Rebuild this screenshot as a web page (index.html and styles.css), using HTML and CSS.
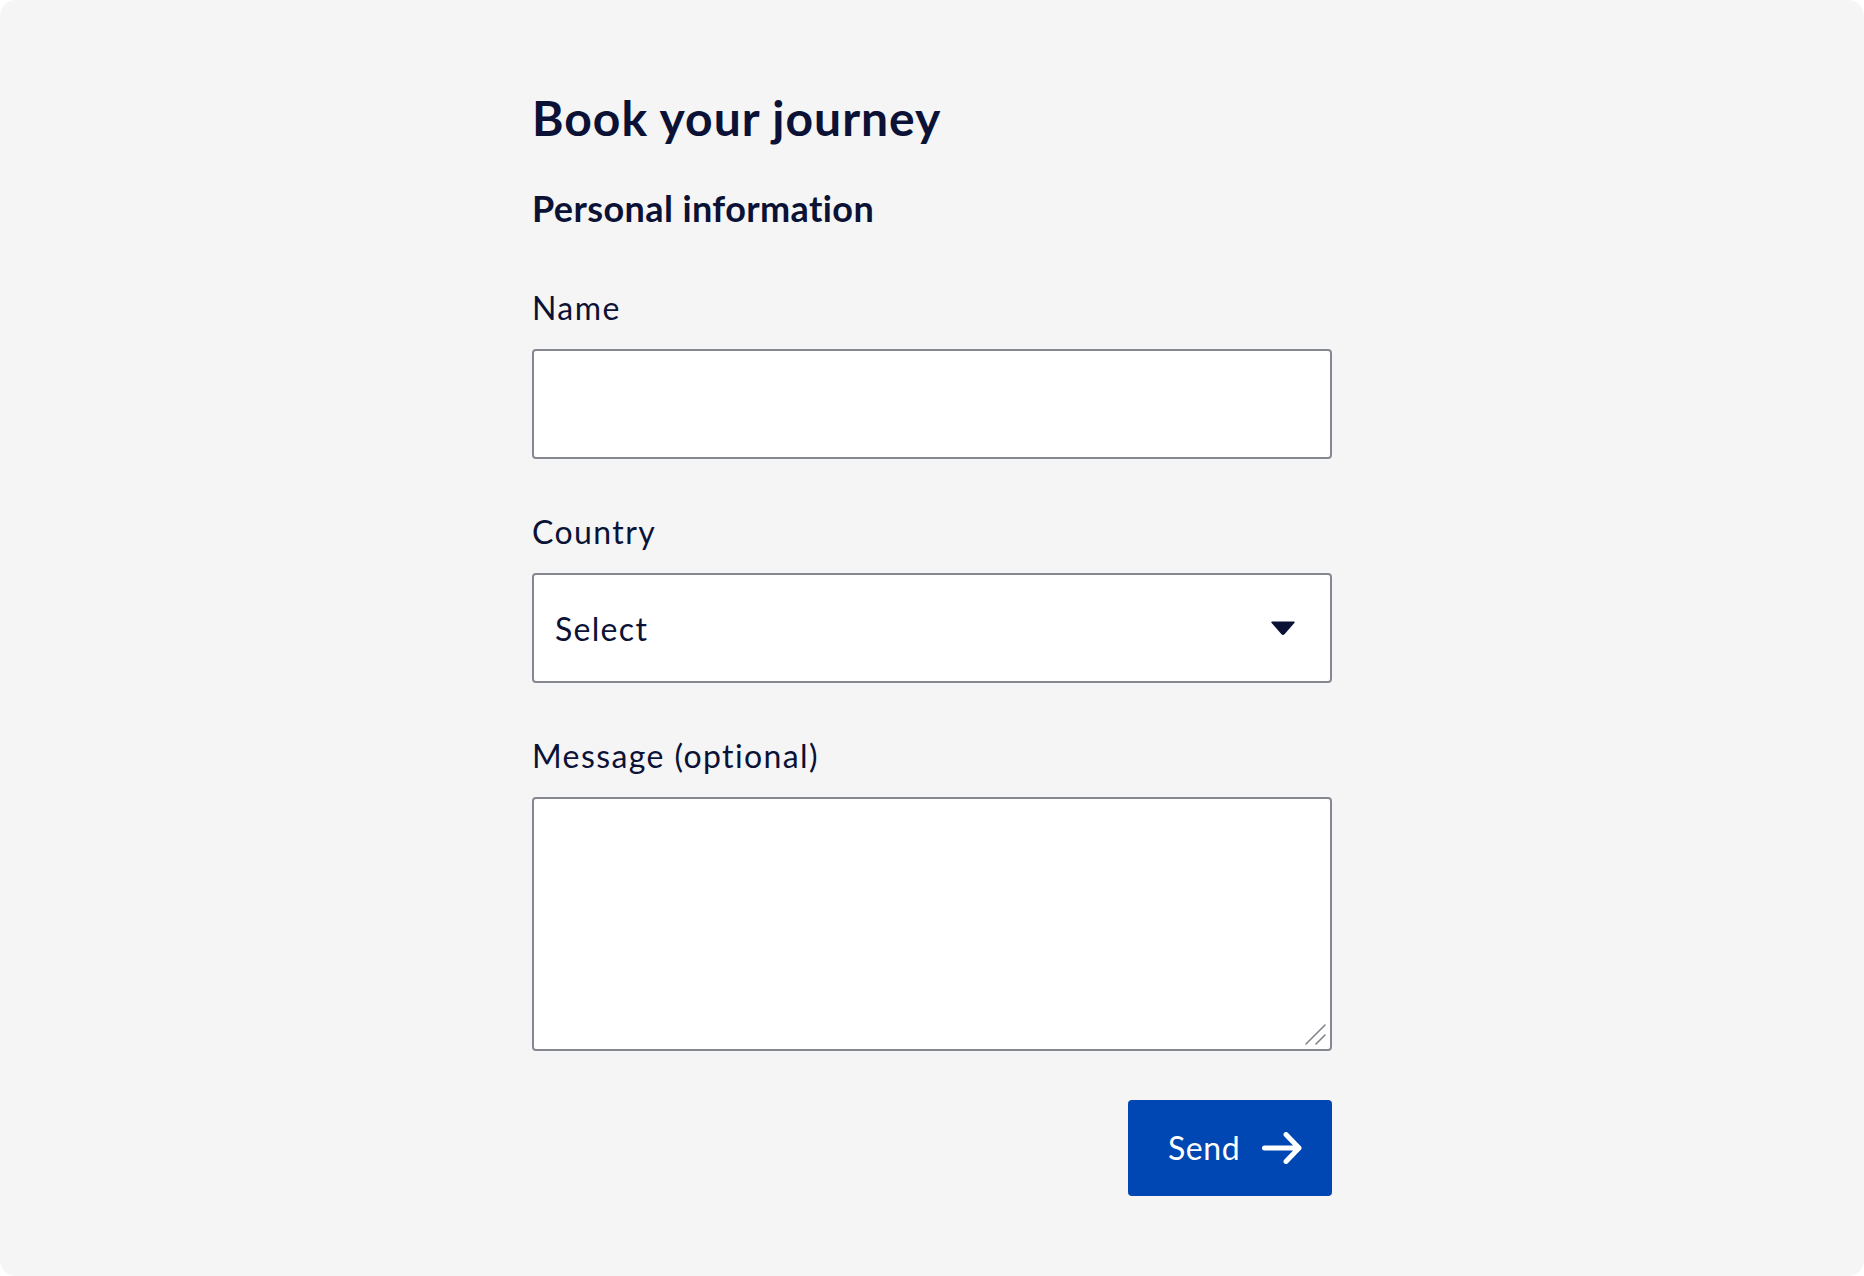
FILE: index.html
```html
<!DOCTYPE html>
<html lang="en">
<head>
<meta charset="utf-8">
<title>Book your journey</title>
<link rel="stylesheet" href="styles.css">
</head>
<body>
<main class="page">
  <form class="booking">
    <h1 class="title">Book your journey</h1>
    <h2 class="subtitle">Personal information</h2>

    <div class="field field-first">
      <label class="label" for="name">Name</label>
      <input class="control input" id="name" type="text">
    </div>

    <div class="field">
      <label class="label" for="country">Country</label>
      <div class="control-wrap">
        <select class="control select" id="country">
          <option>Select</option>
        </select>
        <svg class="select-arrow" width="24" height="14" viewBox="0 0 24 14" aria-hidden="true">
          <path d="M1 1.2 H23 L13.2 12.6 Q12 13.8 10.8 12.6 Z" fill="#0b1236" stroke="#0b1236" stroke-width="1.4" stroke-linejoin="round"/>
        </svg>
      </div>
    </div>

    <div class="field">
      <label class="label" for="message">Message (optional)</label>
      <div class="control-wrap">
        <textarea class="control textarea" id="message"></textarea>
        <svg class="resize-grip" width="24" height="24" viewBox="0 0 24 24" aria-hidden="true">
          <path d="M3 22 L22 3 M13 22 L22 13" fill="none" stroke="#80838d" stroke-width="1.6" stroke-linecap="round"/>
        </svg>
      </div>
    </div>

    <div class="actions">
      <button class="send" type="button">
        <span class="send-text">Send</span>
        <svg class="send-icon" width="40" height="32" viewBox="0 0 40 32" aria-hidden="true">
          <path d="M2.5 16 H37 M24 2.5 L37 16 L24 29.5" fill="none" stroke="#ffffff" stroke-width="5" stroke-linecap="round" stroke-linejoin="round"/>
        </svg>
      </button>
    </div>
  </form>
</main>
</body>
</html>
```

FILE: styles.css
```css
* {
  box-sizing: border-box;
}

html, body {
  margin: 0;
  padding: 0;
  background: #ffffff;
}

body {
  font-family: "Lato", "Noto Sans", "Liberation Sans", sans-serif;
  color: #0b1236;
}

.page {
  height: 1276px;
  background: #f5f5f5;
  border-radius: 16px;
  padding-top: 90px;
}

.booking {
  width: 800px;
  margin: 0 auto;
  display: flex;
  flex-direction: column;
}

.title {
  margin: 0;
  font-size: 48px;
  line-height: 56px;
  font-weight: 700;
  letter-spacing: 1px;
}

.subtitle {
  margin: 40px 0 0;
  font-size: 36px;
  line-height: 44px;
  font-weight: 700;
  letter-spacing: 0.4px;
}

.field {
  display: flex;
  flex-direction: column;
  margin-top: 53px;
}

.field-first {
  margin-top: 58px;
}

.label {
  font-size: 32px;
  line-height: 40px;
  font-weight: 400;
  letter-spacing: 1.4px;
  margin-bottom: 21px;
}

.control {
  display: block;
  width: 100%;
  border: 2px solid #858893;
  border-radius: 4px;
  background: #ffffff;
  font-family: inherit;
  color: #0b1236;
  font-size: 32px;
  letter-spacing: 1.3px;
  outline: none;
  margin: 0;
}

.input {
  height: 110px;
  padding: 0 20px;
}

.control-wrap {
  position: relative;
}

.select {
  height: 110px;
  padding: 0 80px 0 21px;
  appearance: none;
  -webkit-appearance: none;
}

.select-arrow {
  position: absolute;
  right: 37px;
  top: 48px;
  pointer-events: none;
}

.textarea {
  height: 254px;
  padding: 20px;
  resize: none;
}

.resize-grip {
  position: absolute;
  right: 5px;
  bottom: 5px;
  pointer-events: none;
}

.actions {
  display: flex;
  justify-content: flex-end;
  margin-top: 49px;
}

.send {
  width: 204px;
  height: 96px;
  border: 0;
  border-radius: 4px;
  background: #0047b4;
  color: #ffffff;
  font-family: inherit;
  font-size: 32px;
  font-weight: 400;
  letter-spacing: 0.6px;
  display: flex;
  align-items: center;
  padding: 0 0 0 40px;
  gap: 22px;
  cursor: pointer;
}

.send-text {
  line-height: 40px;
}

.send-icon {
  display: block;
}
```
